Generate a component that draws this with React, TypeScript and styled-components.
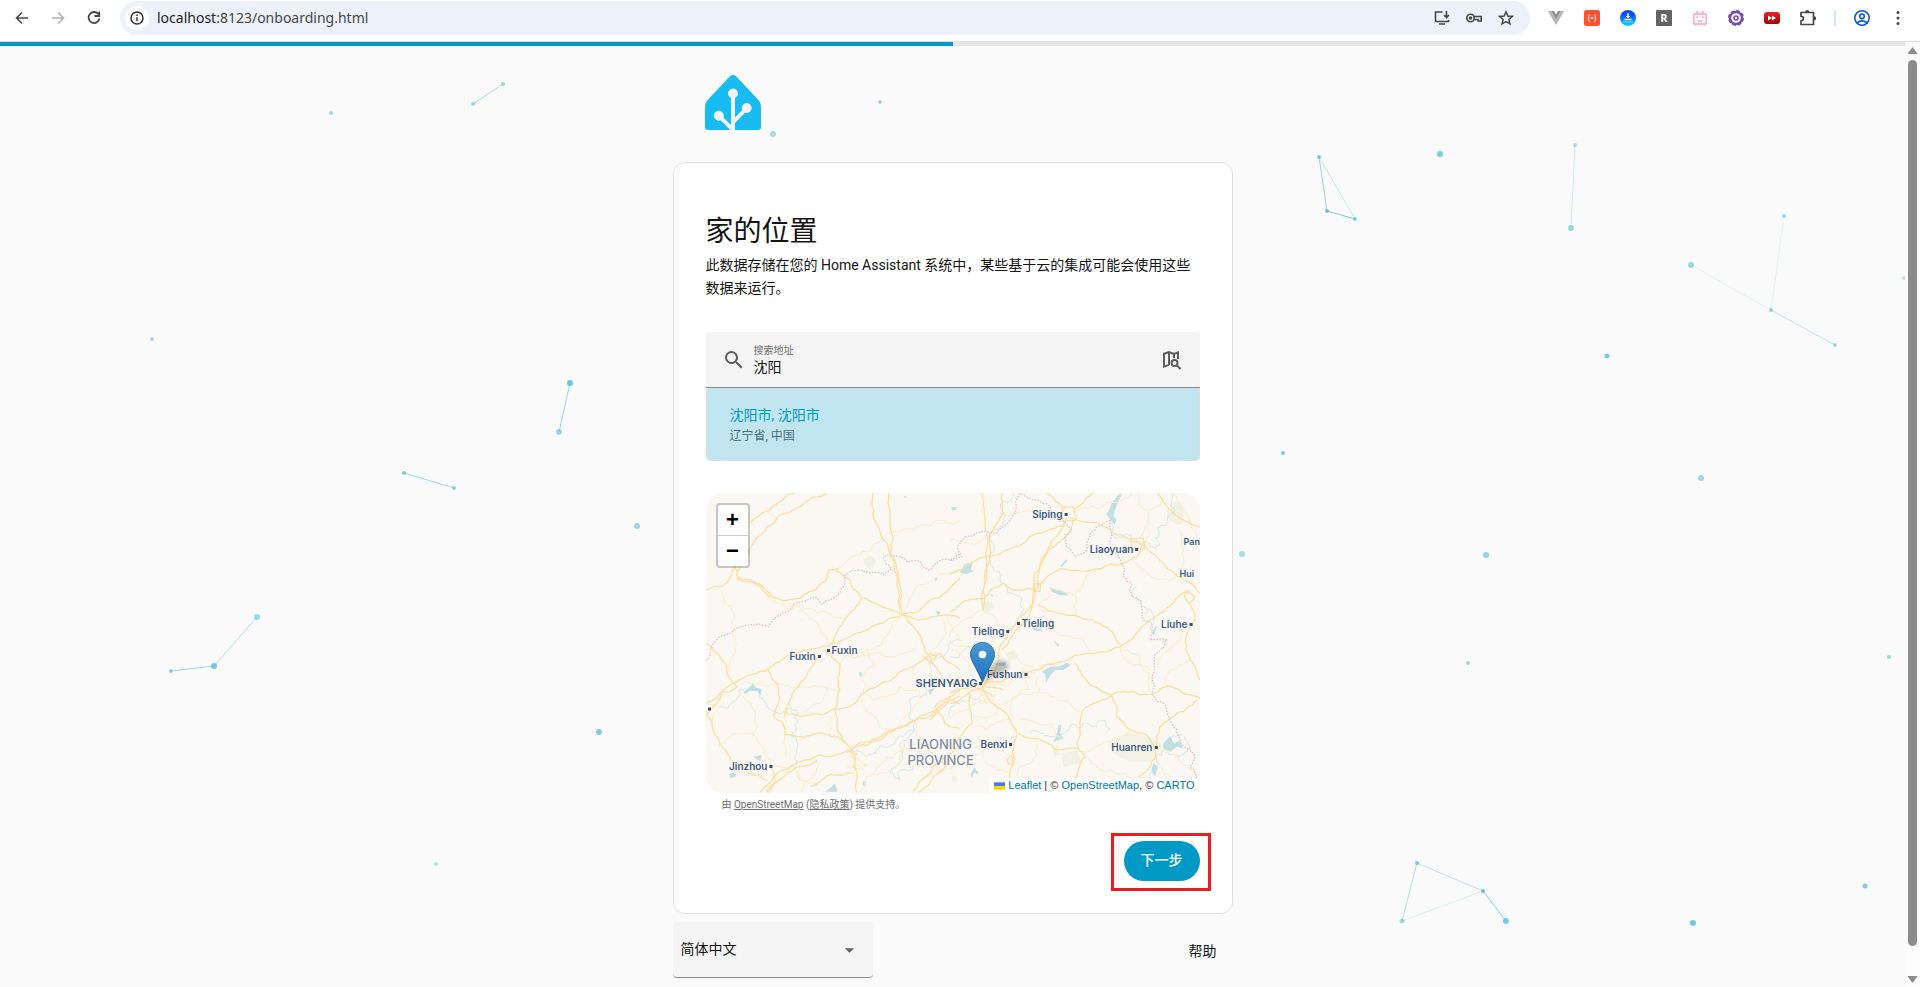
import React from "react";
import styled, { createGlobalStyle } from "styled-components";

const GlobalStyle = createGlobalStyle`
  *, *::before, *::after { box-sizing: border-box; }
  body {
    margin: 0;
    background: #fafafa;
    color: #141414;
    font-family: Roboto, "Noto Sans CJK SC", sans-serif;
    font-size: 14px;
  }
  button, input, select { font: inherit; color: inherit; }
`;

/* ---------- browser chrome ---------- */

const Window = styled.div`
  min-height: 100vh;
  display: flex;
  flex-direction: column;
`;

const Toolbar = styled.header`
  display: flex;
  align-items: center;
  height: 42px;
  padding: 1px 14px 6px;
  background: #fff;
  border-bottom: 1px solid #dfe0e2;
`;

const IconGroup = styled.div<{ $gap: number }>`
  display: flex;
  align-items: center;
  gap: ${(p) => p.$gap}px;
`;

const IconButton = styled.button<{ $size?: number; $color?: string }>`
  display: block;
  width: ${(p) => p.$size ?? 16}px;
  height: ${(p) => p.$size ?? 16}px;
  padding: 0;
  border: 0;
  background: none;
  color: ${(p) => p.$color ?? "#474747"};
  svg { display: block; width: 100%; height: 100%; }
`;

const AddressBar = styled.div`
  flex: 1;
  display: flex;
  align-items: center;
  gap: 8px;
  height: 34px;
  margin: 0 18px;
  padding: 0 16px 0 5px;
  border-radius: 17px;
  background: #ecf1fa;
`;

const SiteInfo = styled.button`
  display: flex;
  align-items: center;
  justify-content: center;
  width: 24px;
  height: 24px;
  padding: 0;
  border: 0;
  border-radius: 50%;
  background: #fff;
`;

const Url = styled.div`
  flex: 1;
  padding-bottom: 2px;
  font-family: "Noto Sans", sans-serif;
  font-size: 14px;
  color: #474747;
  span { color: #1f1f1f; }
`;

const ToolbarDivider = styled.div`
  width: 2px;
  height: 16px;
  margin: 0 -2px;
  background: #d3e3fd;
`;

const Viewport = styled.div`
  flex: 1;
  display: flex;
`;

const Page = styled.div`
  flex: 1;
  position: relative;
  overflow: hidden;
`;

const Scrollbar = styled.div`
  width: 15px;
  display: flex;
  flex-direction: column;
  align-items: center;
  padding: 5px 0 4px;
  background: #fcfcfc;
`;

const ScrollThumb = styled.div`
  flex: 1;
  width: 9px;
  margin: 6px 0 30px;
  border-radius: 5px;
  background: #8b8b8b;
`;

const ScrollArrow = styled.svg`
  display: block;
  width: 9px;
  height: 7px;
  fill: #8b8b8b;
`;

/* ---------- onboarding page ---------- */

const Progress = styled.div`
  position: relative;
  height: 4px;
  background: #e5e5e5;
`;

const ProgressValue = styled.div`
  width: 50%;
  height: 100%;
  background: #009ac7;
`;

const Particles = styled.svg`
  position: absolute;
  inset: 0;
  width: 100%;
  height: 100%;
  stroke: #47b8d9;
  fill: #47b8d9;
`;

const Content = styled.main`
  position: relative;
  max-width: 560px;
  margin: 0 auto;
  padding: 29px 0 8px;
`;

const Logo = styled.svg`
  display: block;
  width: 56px;
  height: 55px;
  margin: 0 32px 32px;
`;

const Card = styled.section`
  padding: 53px 32px 32px;
  border: 1px solid #e0e0e0;
  border-radius: 12px;
  background: #fff;
`;

const Title = styled.h1`
  margin: 0 0 6px;
  font-size: 28px;
  line-height: 32px;
  font-weight: 400;
`;

const Intro = styled.p`
  margin: 0 0 32px;
  line-height: 23px;
`;

const SearchField = styled.div`
  display: flex;
  align-items: center;
  height: 56px;
  padding: 0 16px;
  border-bottom: 1px solid #8c8c8c;
  border-radius: 4px 4px 0 0;
  background: #f5f5f5;
  color: #5c5c5c;
`;

const FieldText = styled.div`
  flex: 1;
  display: flex;
  flex-direction: column;
  margin: 0 8px;
  label { font-size: 10px; line-height: 14px; color: #6f6f6f; }
  input {
    width: 100%;
    height: 18px;
    padding: 0 0 2px;
    border: 0;
    outline: 0;
    background: none;
    color: #141414;
  }
`;

const Results = styled.ul`
  margin: 0 0 32px;
  padding: 0;
  list-style: none;
  border: 1px solid #e0e0e0;
  border-top: 0;
  border-radius: 0 0 4px 4px;
`;

const Result = styled.button`
  display: block;
  width: 100%;
  padding: 16px 23px 14px;
  border: 0;
  border-radius: 0 0 4px 4px;
  background: #c2e6f1;
  text-align: left;
  line-height: 22px;
  color: #009ac7;
  small { display: block; font-size: 12px; line-height: 20px; color: #4b6f7a; }
`;

const MapFrame = styled.div`
  position: relative;
  height: 300px;
  overflow: hidden;
  border-radius: 16px;
  background: #fbf8f3;
`;

const MapDrawing = styled.svg`
  position: absolute;
  inset: 0;
  width: 494px;
  height: 300px;
  fill: none;
  stroke-linejoin: round;
`;

const Place = styled.span<{ $x: number; $y: number; $side?: "left" | "right"; $size?: number }>`
  position: absolute;
  left: ${(p) => p.$x}px;
  top: ${(p) => p.$y}px;
  display: flex;
  flex-direction: ${(p) => (p.$side === "right" ? "row" : "row-reverse")};
  align-items: center;
  gap: 2px;
  transform: translate(${(p) => (p.$side === "right" ? "-2px" : "calc(-100% + 2px)")}, -50%);
  font-family: Inter, sans-serif;
  font-size: ${(p) => p.$size ?? 10}px;
  line-height: 12px;
  font-weight: 600;
  white-space: nowrap;
  color: #3d5a80;
  text-shadow: 0 0 2px #fff, 0 0 1px #fff;
  &::before { content: ""; width: 3px; height: 3px; background: #34506f; }
`;

const Region = styled.span`
  position: absolute;
  left: 202px;
  top: 243px;
  font-family: Inter, sans-serif;
  font-size: 13px;
  line-height: 16px;
  font-weight: 500;
  text-align: center;
  color: #7d8ea5;
  text-shadow: 0 0 2px #fff;
`;

const EdgePlace = styled.span<{ $x: number; $y: number }>`
  position: absolute;
  left: ${(p) => p.$x}px;
  top: ${(p) => p.$y}px;
  font-family: Inter, sans-serif;
  font-size: 9px;
  line-height: 12px;
  font-weight: 600;
  color: #3d5a80;
`;

const Marker = styled.svg`
  position: absolute;
  left: 264px;
  top: 149px;
  width: 60px;
  height: 44px;
`;

const ZoomControl = styled.div`
  position: absolute;
  left: 10px;
  top: 10px;
  width: 34px;
  border: 2px solid rgba(0, 0, 0, 0.2);
  border-radius: 4px;
  background: #fff;
  background-clip: padding-box;
`;

const ZoomButton = styled.button`
  display: block;
  width: 30px;
  height: 30px;
  padding: 0;
  border: 0;
  background: none;
  font-family: "Liberation Sans", sans-serif;
  font-size: 22px;
  line-height: 30px;
  font-weight: 700;
  color: #000;
  & + & { height: 31px; border-top: 1px solid #ccc; }
`;

const Attribution = styled.div`
  position: absolute;
  right: 0;
  bottom: 0;
  display: flex;
  align-items: center;
  padding: 0 5px;
  background: rgba(255, 255, 255, 0.8);
  font-family: "Liberation Sans", sans-serif;
  font-size: 11px;
  line-height: 15px;
  color: #333;
  white-space: pre;
  a { color: #0078a8; text-decoration: none; }
  svg { width: 11px; height: 8px; margin-right: 3px; }
`;

const Note = styled.p`
  margin: 4px 16px 28px;
  font-size: 10px;
  line-height: 16px;
  color: #6f6f6f;
  a { color: inherit; }
`;

const Actions = styled.div`
  display: flex;
  justify-content: flex-end;
`;

const NextButton = styled.button`
  position: relative;
  height: 40px;
  padding: 0 17px 4px;
  border: 0;
  border-radius: 20px;
  background: #009ac7;
  color: #fff;
  font-weight: 500;
  &::after {
    content: "";
    position: absolute;
    inset: -8px -11px -10px -13px;
    border: 3px solid #ed1c24;
  }
`;

const Footer = styled.footer`
  display: flex;
  align-items: center;
  justify-content: space-between;
  margin-top: 8px;
`;

const LanguagePicker = styled.div`
  position: relative;
  width: 200px;
  select {
    display: block;
    width: 100%;
    height: 56px;
    padding: 0 8px 2px;
    appearance: none;
    border: 0;
    border-bottom: 1px solid #8c8c8c;
    border-radius: 4px;
    background: #f5f5f5;
  }
  svg {
    position: absolute;
    right: 19px;
    top: 26px;
    width: 9px;
    height: 5px;
    fill: #5c5c5c;
  }
`;

const HelpLink = styled.a`
  padding: 0 16px;
  color: inherit;
  text-decoration: none;
`;

/* ---------- map data ---------- */

type Pt = [number, number];

// Splits every segment at a slightly displaced midpoint, so that roads bend.
function wander(points: string, seed: number, amount: number): string {
  let state = seed * 9301 + 49297;
  const rand = () => {
    state = (state * 9301 + 49297) % 233280;
    return state / 233280 - 0.5;
  };
  let pts: Pt[] = points.split(" ").map((p) => p.split(",").map(Number) as Pt);
  for (let level = 0; level < 3; level++) {
    const next: Pt[] = [pts[0]];
    for (let i = 1; i < pts.length; i++) {
      const [ax, ay] = pts[i - 1];
      const [bx, by] = pts[i];
      const len = Math.hypot(bx - ax, by - ay);
      const k = rand() * amount;
      if (len > 8) next.push([(ax + bx) / 2 - (by - ay) * k, (ay + by) / 2 + (bx - ax) * k]);
      next.push(pts[i]);
    }
    pts = next;
  }
  return "M" + pts.map(([x, y]) => `${x.toFixed(1)} ${y.toFixed(1)}`).join("L");
}

const west = {
  major: [
    "110,245 150,175 200,112 240,75 300,50 350,22 380,9",
    "150,98 178,76 208,62 236,38 262,14 285,9",
    "18,298 62,290 92,262 105,225",
    "105,230 112,262 150,270 188,287 215,320 250,332 300,325 345,300 380,270 385,240 415,236",
    "110,266 150,275 185,292 210,322",
    "518,9 520,80 545,140 572,195 592,260 600,360",
    "565,9 570,90 571,190 598,280 605,370 642,412 667,460 690,500 720,555",
    "405,240 450,270 485,322 540,347 605,375 560,390 500,420 440,445 395,465",
    "485,325 435,385 400,455 385,468",
    "608,375 650,368 690,330 780,265",
    "608,374 680,387 740,375 780,385",
    "350,475 310,482 260,497 215,530 170,550 110,575 70,600 50,640 18,680",
    "375,480 420,525 420,600 405,660 412,720 455,780 470,908",
    "350,500 320,560 270,630 252,680",
    "18,460 50,490 80,530 110,590 60,610 20,640",
    "18,665 40,720 60,765 90,800 150,850 200,870",
    "205,538 235,590 230,650 220,675 250,700 255,735 310,742 360,727 420,745 455,780 510,760 565,728 640,695 700,665 780,600",
    "250,665 330,675 410,657 450,650 485,612 530,590 600,545 640,530 670,510 720,490 780,540",
    "180,908 230,850 300,815 360,795 455,780",
    "200,908 260,848 350,812",
    "455,772 520,748 600,715 700,672 740,640 780,618",
    "640,908 690,850 740,800 780,770",
    "655,908 700,860 745,815 780,800",
    "330,890 385,855 462,850",
    "690,690 715,662 705,650 740,625 780,640",
    "670,500 690,520 710,498 690,490 672,508",
    "210,822 225,870 205,908",
    "710,660 735,700 780,716",
    "440,780 470,790 462,830 468,840",
    "385,468 350,475",
  ],
  minor: [
    "385,248 415,232 470,197 512,182 545,148",
    "205,320 250,346 290,350 330,385 370,435 385,465",
    "62,298 75,340 100,365 98,430 108,460 90,510 80,560",
    "200,62 230,90 215,110",
    "545,148 600,125 680,105 740,100 780,92",
    "250,350 300,345 350,370 430,385",
    "605,375 560,440 520,480 440,495 420,520",
    "440,495 540,488 600,490 650,470",
    "608,370 650,290 720,250 780,235",
    "720,380 740,430 700,480",
    "110,590 150,580 205,590 240,580 300,592 360,588 420,605",
    "270,640 300,690 360,640 385,590",
    "485,615 520,680 570,720 610,760 600,820",
    "395,680 395,740",
    "255,680 255,740 260,800",
    "60,765 110,730 170,740 200,800 225,830",
    "120,610 165,680 160,740",
    "485,612 560,620 600,590 650,600 680,560",
    "500,480 525,525 485,560 490,610",
    "480,908 500,860 560,850 600,820",
    "520,850 560,800 640,780 700,790 780,760",
    "640,690 650,740 700,790 720,850",
    "300,908 330,870 350,812",
    "280,830 300,870 355,880",
    "225,830 280,822 300,870",
    "640,530 660,580 650,640 600,700",
    "740,380 770,430 780,480",
    "18,640 60,650 40,690 18,690",
    "445,800 500,825 440,835 490,840",
    "690,830 740,815 720,850 760,830",
  ],
  water: [
    "780,455 745,470 720,500 690,530 700,570 680,600 640,620 630,670 632,730 600,770 570,850 600,870 640,830",
    "60,650 110,625 140,595",
    "180,610 205,655 250,665 295,672 290,720 275,740 290,790 280,830",
    "520,790 550,770 610,740 640,720",
    "440,790 500,800 530,790",
  ],
  border: "18,512 40,460 90,430 130,408 175,402 205,410 240,375 280,345 345,320 368,343 400,325 430,290 435,255 475,240 505,248 550,255 575,235 550,205 560,195 600,200 625,217 660,215 685,240 705,222 760,205 780,190",
  lakes: [
    "130,606 150,590 160,578 165,592 185,598 182,618 172,604 150,602 136,612",
    "375,905 395,890 405,880 412,905",
    "160,800 185,795 180,815",
    "478,546 486,548 484,562 478,558",
    "490,872 500,876 494,890 488,884",
    "88,852 105,846 108,858 92,866",
    "684,600 704,594 690,616",
    "708,362 722,366 712,378",
    "754,54 770,58 758,62",
    "706,262 712,266 706,276",
    "612,18 624,22 614,24",
  ],
  green: ["490,208 510,198 528,210 524,230 505,236 492,222", "300,385 310,390 306,400", "756,855 770,860 768,880 756,870"],
};

const east = {
  major: [
    "155,9 160,70 130,115 122,190 100,300 98,360",
    "95,9 105,100 108,200 95,310 100,360",
    "350,85 330,125 290,192 255,250 255,300 235,360 190,410 150,470 140,530 100,590",
    "370,92 335,150 275,205 265,290 240,370 200,418 155,480",
    "0,250 70,215 170,180 260,130 345,102",
    "360,85 440,97 490,130 540,150 570,160 640,220 700,270 735,290 750,310",
    "290,9 345,58",
    "430,9 372,60",
    "620,9 650,50 700,90 750,112",
    "575,165 560,200 520,220 450,237 330,237 262,285",
    "265,345 330,370 400,387 450,400 490,430 510,465",
    "100,580 180,562 240,545 330,515 420,490 510,470 560,430 600,390 650,355 710,302",
    "375,520 410,570 450,600 485,615 540,605 610,612 650,590 700,610 750,625",
    "485,617 430,640 400,660 390,710 380,760 405,800 380,860 350,908",
    "740,630 680,670 630,710 620,770",
    "485,615 500,680 540,720 600,745 620,772 600,830 560,880 555,908",
    "100,600 140,650 180,690 200,730 250,745 320,780 380,775",
    "200,735 190,800 185,908",
    "60,610 65,700 30,740 0,780",
    "0,365 50,332 100,325 160,280 190,300 260,300",
    "0,570 60,580 110,590 160,600",
    "0,610 50,595 100,600 130,620",
    "0,640 60,605 110,580",
    "540,145 580,145 585,175 550,180 540,150",
    "335,50 370,50 378,88 340,92 335,52",
    "250,282 270,282 270,304 252,304 250,284",
    "710,305 735,320 715,340 703,318 720,300",
    "720,340 735,390 705,450 720,510 750,570",
    "170,810 180,797 195,805 192,822 175,822 170,810",
  ],
  minor: [
    "120,585 190,570 260,540 340,518",
    "668,9 700,60 725,110 750,150",
    "380,60 450,55 500,38 545,9",
    "0,480 40,500 90,530 110,560",
    "0,440 30,400 98,360 140,400 180,410",
    "262,345 300,300 380,320 372,350 400,387",
    "450,237 400,280 375,310",
    "510,465 570,500 600,550 605,610",
    "545,210 580,240 640,270 680,260 700,180 690,120",
    "580,170 600,130 590,60 560,9",
    "640,30 600,60 575,140",
    "265,560 270,610 310,620 360,640 385,670",
    "230,540 240,600 190,620 200,720",
    "140,640 220,610 265,608",
    "420,490 400,450 360,440 300,420 265,345",
    "320,780 330,740 300,700 210,690",
    "250,745 260,800 210,830 200,860",
    "380,775 450,765 540,725",
    "620,770 680,790 720,840 740,860",
    "620,800 640,850 700,890",
    "400,800 450,840 520,850 560,880",
    "60,700 110,720 180,690",
    "0,690 60,660 120,680 150,640",
    "70,770 110,820 180,850",
    "0,840 40,800 90,790",
    "120,560 60,540 20,560 0,590",
    "100,500 60,470 0,450",
    "160,480 200,500 250,530",
    "620,530 680,460 700,390",
    "650,590 660,540 720,510",
    "510,470 540,520 600,540",
    "150,70 230,60 330,90",
    "0,150 60,160 130,115",
    "110,400 130,470 150,500",
    "200,735 140,760 80,740",
    "80,600 90,640 130,630 135,590 100,570",
    "20,560 70,590 110,640 60,650",
  ],
  water: [
    "190,9 165,70 150,110 118,130 135,180 130,235 150,265 190,310 220,355 210,375 240,410 290,420",
    "0,500 50,470 100,470",
    "490,80 485,130 520,140 560,150 600,170 630,165 625,120 650,100 668,9",
    "240,730 300,740 330,735 400,700 440,710 460,690 480,720",
    "650,755 700,740 720,770 690,800 640,780 620,800 600,850 590,908",
    "0,680 30,640 90,620 100,590",
    "560,290 580,350 600,420",
    "140,500 110,530 90,560",
  ],
  border: "0,212 35,200 25,165 50,140 100,125 140,130 160,110 210,10 250,30 300,50 305,75 345,95 365,120 345,135 350,170 375,200 410,180 440,110 485,85 485,180 515,215 520,260 545,280 545,320 575,335 575,380 605,400 600,450 650,450 640,475 612,500 605,560 610,620 640,640 660,690 690,750 735,800 720,830 740,870",
  lakes: [
    "485,40 505,14 516,12 500,45 490,78 500,90 494,104 484,92 468,72 476,64",
    "30,245 45,222 68,216 62,240 72,244 50,252 34,250",
    "298,292 318,300 338,302 356,316 330,316 306,306",
    "275,545 300,530 330,528 352,518 362,526 340,540 316,540 300,558 288,578 286,552",
    "5,50 20,52 18,60 6,60",
    "330,228 350,208 352,212 336,230",
    "115,308 130,316 126,320",
    "312,452 328,466 322,470",
    "606,430 618,406 620,412 612,436",
    "640,760 660,738 672,760 690,752 700,775 680,770 660,785 640,775",
    "325,705 334,704 330,735 342,745 310,756 320,738",
    "62,850 74,832 86,852 72,848 66,866",
    "610,820 624,830 615,860 604,842",
    "136,520 168,516 164,528 138,526",
    "240,408 262,414 280,424 260,424",
    "552,862 570,872 560,880",
  ],
  green: [
    "650,60 680,30 700,55 700,100 680,105 655,85",
    "485,745 540,730 610,745 640,770 600,815 540,815 490,790",
    "100,340 125,330 130,355 105,372",
    "165,490 190,480 205,500 180,515",
    "335,790 385,780 395,820 340,830",
    "630,450 655,450 650,475",
    "305,770 330,790 315,800",
    "590,360 602,366 585,374",
  ],
};

function MapLayer({ layer, x }: { layer: typeof west; x: number }) {
  return (
    <g transform={`scale(0.333333) translate(${x} -9)`}>
      {layer.green.map((p) => <polygon key={p} points={p} fill="#f1f2e4" />)}
      {layer.water.map((p, i) => <path key={p} d={wander(p, i + 60, 0.7)} stroke="#d3e8eb" strokeWidth={3} />)}
      {layer.lakes.map((p) => <polygon key={p} points={p} fill="#c3dfe6" />)}
      {layer.minor.map((p, i) => <path key={p} d={wander(p, i + 30, 0.4)} stroke="#fdebc6" strokeWidth={3} />)}
      {layer.major.map((p, i) => <path key={p} d={wander(p, i + 1, 0.22)} stroke="#fcdfa3" strokeWidth={4} />)}
      <path d={wander(layer.border, 7, 0.3)} stroke="#e3c6cd" strokeWidth={4} strokeDasharray="5 4" />
    </g>
  );
}

/* ---------- particles ---------- */

// x, y, radius, opacity
const dots: [number, number, number, number][] = [
  [331, 71, 2, 0.5], [473, 62, 2, 0.5], [503, 42, 2, 0.5], [880, 60, 2, 0.5], [773, 92, 3, 0.45],
  [1319, 115, 2, 0.7], [1327, 169, 2, 0.8], [1355, 177, 2, 0.6], [1440, 112, 3, 0.7], [1575, 103, 2, 0.45],
  [1571, 186, 3, 0.55], [1784, 174, 2, 0.5], [1691, 223, 3, 0.55], [1771, 268, 2, 0.6], [1835, 303, 2, 0.5],
  [1607, 314, 2.5, 0.7], [1283, 411, 2, 0.7], [1701, 436, 3, 0.5], [152, 297, 2, 0.45], [570, 341, 3, 0.8],
  [559, 390, 3, 0.5], [404, 431, 2, 0.7], [454, 446, 2, 0.6], [637, 484, 3, 0.55], [257, 575, 3, 0.5],
  [214, 624, 3, 0.75], [171, 629, 2, 0.6], [599, 690, 3, 0.7], [1468, 621, 2, 0.5], [1889, 615, 2, 0.55],
  [1417, 821, 2, 0.7], [1483, 849, 2, 0.8], [1402, 879, 2.5, 0.5], [1506, 879, 3, 0.7], [1693, 881, 3, 0.75],
  [1865, 844, 2.5, 0.7], [1242, 512, 3, 0.45], [1486, 513, 3, 0.6], [436, 822, 2, 0.4], [1904, 236, 2, 0.35],
];

// x1, y1, x2, y2, opacity
const links: [number, number, number, number, number][] = [
  [473, 62, 503, 42, 0.5], [1319, 115, 1327, 169, 0.55], [1327, 169, 1355, 177, 0.7], [1319, 115, 1355, 177, 0.3],
  [1575, 103, 1571, 186, 0.25], [1784, 174, 1771, 268, 0.12], [1691, 223, 1771, 268, 0.12], [1771, 268, 1835, 303, 0.35],
  [570, 341, 559, 390, 0.55], [404, 431, 454, 446, 0.5], [257, 575, 214, 624, 0.4], [214, 624, 171, 629, 0.55],
  [1417, 821, 1483, 849, 0.35], [1417, 821, 1402, 879, 0.4], [1402, 879, 1483, 849, 0.18], [1483, 849, 1506, 879, 0.65],
];

/* ---------- icons ---------- */

const Stroke = ({ children, w = 1.6 }: { children: React.ReactNode; w?: number }) => (
  <svg viewBox="0 0 16 16" fill="none" stroke="currentColor" strokeWidth={w} aria-hidden="true">{children}</svg>
);

const extensions: { name: string; icon: React.ReactNode }[] = [
  { name: "Vue", icon: <svg viewBox="0 0 16 16"><path d="M0 1h16L8 15z" fill="#b5b5b5" /><path d="M3.5 1h9L8 9z" fill="#8c8c8c" /><path d="M6 1h4L8 4.500z" fill="#fff" /></svg> },
  { name: "JSON", icon: <svg viewBox="0 0 16 16"><rect width="16" height="16" rx="2.500" fill="#ff5230" /><path d="M6 4.500H5.500Q4.800 4.500 4.800 5.500V7L3.800 8l1 1v1.500q0 1 .7 1H6M10 4.500h.5q.7 0 .7 1V7l1 1-1 1v1.500q0 1-.7 1H10" fill="none" stroke="#fff" /><path d="M6.500 8h3" stroke="#fff" strokeWidth="1.200" /></svg> },
  { name: "下载", icon: <svg viewBox="0 0 16 16"><defs><linearGradient id="dl" x1="0" y1="0" x2="0" y2="1"><stop offset=".3" stopColor="#0a4bff" /><stop offset="1" stopColor="#10d8ff" /></linearGradient></defs><circle cx="8" cy="8" r="8" fill="url(#dl)" /><path d="M8 3v4M4.500 9.500h7" stroke="#fff" strokeWidth="1.500" /><path d="M5.800 6h4.400L8 8.500z" fill="#fff" /><path d="M3 12h10" stroke="#8fe6ff" strokeWidth=".8" /></svg> },
  { name: "R", icon: <svg viewBox="0 0 16 16"><rect width="16" height="16" rx="1" fill="#636363" /><text x="8" y="12" textAnchor="middle" fontFamily="Open Sans" fontWeight="700" fontSize="11" fill="#fff">R</text></svg> },
  { name: "TV", icon: <svg viewBox="0 0 16 16" fill="none" stroke="#fbb3c8" strokeWidth="1.800"><path d="M4.500 1l2 3M11.500 1l-2 3M3 14v1.500M13 14v1.500" /><rect x="1.800" y="4" width="12.400" height="10" rx="1" /><path d="M4 7.500l2.500-.8M12 7.500l-2.500-.8M5.500 10.500l1.200 1 1.300-1 1.300 1 1.200-1" strokeWidth="1.500" /></svg> },
  { name: "Gear", icon: <svg viewBox="0 0 16 16"><circle cx="8" cy="8" r="7.200" fill="#744da9" /><circle cx="8" cy="8" r="7.200" fill="none" stroke="#744da9" strokeWidth="1.600" strokeDasharray="3.800 1.850" /><circle cx="8" cy="8" r="3.800" fill="none" stroke="#fff" strokeWidth="2" /><circle cx="8" cy="8" r="1.200" fill="#fff" /></svg> },
  { name: "Speed", icon: <svg viewBox="0 0 16 16"><defs><linearGradient id="yt" x1="0" y1="0" x2="0" y2="1"><stop stopColor="#e22" /><stop offset="1" stopColor="#a00008" /></linearGradient></defs><rect y="2" width="16" height="12" rx="3" fill="url(#yt)" /><path d="M4 5.500L8 8l-4 2.500zM8 5.500L12 8l-4 2.500z" fill="#fff" /></svg> },
  { name: "扩展程序", icon: <svg viewBox="0 0 16 16" fill="none" stroke="#474747" strokeWidth="1.700" overflow="visible"><path d="M1 2.500h12.500v12H1v-3.800q2.400 0 2.400-2.200T1 6.300z" strokeLinejoin="round" /><path d="M5.200 2a2.100 2.100 0 0 1 4.200 0zM14 6.300a2.100 2.100 0 0 1 0 4.200z" fill="#474747" stroke="none" /></svg> },
];

export default function App() {
  return (
    <Window>
      <GlobalStyle />
      <Toolbar>
        <IconGroup $gap={20}>
          <IconButton aria-label="后退"><Stroke><path d="M14 8H3M8 2.500L2.500 8 8 13.500" /></Stroke></IconButton>
          <IconButton aria-label="前进" $color="#b0b0b0"><Stroke><path d="M2 8h11M8 2.500L13.500 8 8 13.500" /></Stroke></IconButton>
          <IconButton aria-label="重新加载"><Stroke w={1.8}><path d="M12.700 4.500A5.500 5.500 0 1 0 13.500 8.500" /><path d="M13.200 1.500V6H8.500" /></Stroke></IconButton>
        </IconGroup>
        <AddressBar>
          <SiteInfo aria-label="网站信息">
            <svg width="14" height="14" viewBox="0 0 14 14" fill="none" stroke="#333" strokeWidth="1.500"><circle cx="7" cy="7" r="6" /><path d="M7 6.200v4M7 3.600v1.500" /></svg>
          </SiteInfo>
          <Url><span>localhost</span>:8123/onboarding.html</Url>
          <IconGroup $gap={16}>
            <IconButton aria-label="安装"><Stroke><path d="M8.500 2H1.500v9.500h13V10M5 14h6M12.500 1v6M10 5l2.500 2.500L15 5" /></Stroke></IconButton>
            <IconButton aria-label="密码"><Stroke><circle cx="4.500" cy="8" r="3.700" /><path d="M8 6.500h7.200V11H12V9.500H8" /><circle cx="4.500" cy="8" r="1" fill="currentColor" /></Stroke></IconButton>
            <IconButton aria-label="收藏"><Stroke w={1.5}><path d="M8 1.800l1.800 4.200 4.500.4-3.400 3 1 4.400L8 11.500l-3.900 2.300 1-4.400-3.400-3 4.500-.4z" /></Stroke></IconButton>
          </IconGroup>
        </AddressBar>
        <IconGroup $gap={20}>
          {extensions.map((e) => <IconButton key={e.name} aria-label={e.name}>{e.icon}</IconButton>)}
          <ToolbarDivider />
          <IconButton aria-label="个人资料" $color="#0b57d0"><Stroke><circle cx="8" cy="8" r="7.200" /><circle cx="8" cy="6.300" r="2.300" /><path d="M3 12.800q5-3.800 10 0" /></Stroke></IconButton>
          <IconButton aria-label="菜单"><svg viewBox="0 0 16 16" fill="currentColor"><circle cx="8" cy="2.500" r="1.500" /><circle cx="8" cy="8" r="1.500" /><circle cx="8" cy="13.500" r="1.500" /></svg></IconButton>
        </IconGroup>
      </Toolbar>

      <Viewport>
        <Page>
          <Particles aria-hidden="true">
            {links.map(([x1, y1, x2, y2, o], i) => <line key={i} x1={x1} y1={y1} x2={x2} y2={y2} opacity={o} />)}
            {dots.map(([cx, cy, r, o], i) => <circle key={i} cx={cx} cy={cy} r={r} opacity={o} stroke="none" />)}
          </Particles>
          <Progress role="progressbar" aria-valuenow={50}><ProgressValue /></Progress>
          <Content>
            <Logo viewBox="0 0 56 55" role="img" aria-label="Home Assistant">
              <path d="M25 1.200Q28-1 31 1.200L52.500 24Q56 27.500 56 32V52Q56 55 53 55H3Q0 55 0 52V32Q0 27.500 3.500 24z" fill="#18bcf2" />
              <g fill="#f2f4f9" stroke="#f2f4f9">
                <path d="M28 18v37M41.700 33L28 47.500M13.800 40.700L28 55" fill="none" strokeWidth="4" />
                <circle cx="28" cy="18.500" r="4.500" /><circle cx="41.700" cy="33" r="4.500" /><circle cx="13.800" cy="40.700" r="4.500" />
              </g>
            </Logo>

            <Card>
              <Title>家的位置</Title>
              <Intro>此数据存储在您的 Home Assistant 系统中，某些基于云的集成可能会使用这些数据来运行。</Intro>

              <SearchField>
                <svg width="24" height="24" viewBox="0 0 24 24" fill="currentColor" aria-hidden="true">
                  <path d="M9.500,3A6.500,6.500 0 0,1 16,9.500C16,11.110 15.410,12.590 14.440,13.730L14.710,14H15.500L20.500,19L19,20.500L14,15.500V14.710L13.730,14.440C12.590,15.410 11.110,16 9.500,16A6.500,6.500 0 0,1 3,9.500A6.500,6.500 0 0,1 9.500,3M9.500,5C7,5 5,7 5,9.500C5,12 7,14 9.500,14C12,14 14,12 14,9.500C14,7 12,5 9.500,5Z" />
                </svg>
                <FieldText>
                  <label htmlFor="address">搜索地址</label>
                  <input id="address" type="text" defaultValue="沈阳" />
                </FieldText>
                <IconButton $size={24} $color="#5c5c5c" aria-label="在地图上搜索">
                  <svg viewBox="0 0 24 24" fill="none" stroke="currentColor" strokeWidth="2">
                    <path d="M18 11V4.500L14 6 9 4 4 5.700V18.600L9 16.900M9 4v13M14 6v4" />
                    <circle cx="14.500" cy="15" r="3" /><path d="M16.600 17.100L20.500 21" />
                  </svg>
                </IconButton>
              </SearchField>
              <Results>
                <li><Result>沈阳市, 沈阳市<small>辽宁省, 中国</small></Result></li>
              </Results>

              <MapFrame>
                <MapDrawing aria-hidden="true">
                  <MapLayer layer={west} x={-18} />
                  <MapLayer layer={east} x={732} />
                </MapDrawing>
                <Place $x={360} $y={21}>Siping</Place>
                <Place $x={431} $y={56}>Liaoyuan</Place>
                <EdgePlace $x={478} $y={43}>Pan</EdgePlace>
                <EdgePlace $x={474} $y={75}>Hui</EdgePlace>
                <Place $x={485} $y={131}>Liuhe</Place>
                <Place $x={313} $y={130} $side="right">Tieling</Place>
                <Place $x={302} $y={138}>Tieling</Place>
                <Place $x={123} $y={157} $side="right">Fuxin</Place>
                <Place $x={113} $y={163}>Fuxin</Place>
                <Place $x={320} $y={181}>Fushun</Place>
                <Place $x={275} $y={190} $size={11}>SHENYANG</Place>
                <Place $x={305} $y={251}>Benxi</Place>
                <Place $x={450} $y={254}>Huanren</Place>
                <Place $x={65} $y={273}>Jinzhou</Place>
                <Place $x={3} $y={216}>{""}</Place>
                <Region>LIAONING<br />PROVINCE</Region>
                <Marker viewBox="0 0 60 44" aria-hidden="true">
                  <defs>
                    <linearGradient id="pin" x1="0" y1="0" x2="0" y2="1"><stop stopColor="#4a9bd4" /><stop offset="1" stopColor="#1a6ec2" /></linearGradient>
                    <filter id="soft"><feGaussianBlur stdDeviation="2" /></filter>
                  </defs>
                  <path d="M13 41L20 26Q28 14 36 20T28 32z" fill="#000" opacity=".24" filter="url(#soft)" />
                  <path d="M12.500.5C5.800.5.500 5.800.500 12.500.500 19 6 24 12.500 40.500 19 24 24.500 19 24.500 12.500 24.500 5.800 19.200.5 12.500.5z" fill="url(#pin)" stroke="#2e73b0" />
                  <circle cx="12.500" cy="12.500" r="4.300" fill="#fff" stroke="#2f77b5" strokeWidth=".8" />
                </Marker>
                <ZoomControl>
                  <ZoomButton aria-label="放大">+</ZoomButton>
                  <ZoomButton aria-label="缩小">−</ZoomButton>
                </ZoomControl>
                <Attribution>
                  <svg viewBox="0 0 12 8"><path fill="#4c7be1" d="M0 0h12v4H0z" /><path fill="#ffd500" d="M0 4h12v4H0z" /></svg>
                  <a href="#leaflet">Leaflet</a> | © <a href="#osm">OpenStreetMap</a>, © <a href="#carto">CARTO</a>
                </Attribution>
              </MapFrame>
              <Note>由 <a href="#osm">OpenStreetMap</a> (<a href="#privacy">隐私政策</a>) 提供支持。</Note>
              <Actions><NextButton>下一步</NextButton></Actions>
            </Card>

            <Footer>
              <LanguagePicker>
                <select aria-label="语言" defaultValue="zh"><option value="zh">简体中文</option></select>
                <svg viewBox="0 0 10 5" aria-hidden="true"><path d="M0 0h10L5 5z" /></svg>
              </LanguagePicker>
              <HelpLink href="#help">帮助</HelpLink>
            </Footer>
          </Content>
        </Page>
        <Scrollbar aria-hidden="true">
          <ScrollArrow viewBox="0 0 9 7"><path d="M4.500 0L9 6v1H0V6z" /></ScrollArrow>
          <ScrollThumb />
          <ScrollArrow viewBox="0 0 9 7"><path d="M4.500 7L9 1V0H0v1z" /></ScrollArrow>
        </Scrollbar>
      </Viewport>
    </Window>
  );
}
